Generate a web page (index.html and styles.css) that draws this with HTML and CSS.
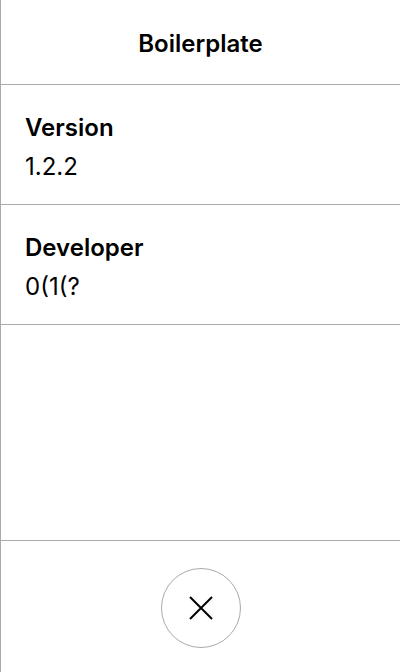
FILE: index.html
```html
<!DOCTYPE html>
<html>
<head>
<meta charset="utf-8">
<link rel="stylesheet" href="styles.css">
</head>
<body>
<div class="app">
  <header class="header">Boilerplate</header>
  <section class="row">
    <div class="label">Version</div>
    <div class="value">1.2.2</div>
  </section>
  <section class="row">
    <div class="label">Developer</div>
    <div class="value">0(1(?</div>
  </section>
  <div class="spacer"></div>
  <footer class="footer">
    <button class="close" aria-label="Close">
      <svg width="24" height="24" viewBox="0 0 24 24"><path d="M1 1L23 23M23 1L1 23" stroke="#000" stroke-width="2" fill="none"/></svg>
    </button>
  </footer>
</div>
</body>
</html>
```
FILE: styles.css
```css
html, body { margin: 0; padding: 0; background: #fff; }
body { font-family: Inter, "Noto Sans", sans-serif; color: #000; }
.app {
  width: 400px; height: 672px; box-sizing: border-box;
  border-left: 1px solid #aaa;
  display: flex; flex-direction: column;
}
.header {
  height: 84px; border-bottom: 1px solid #aaa;
  display: flex; align-items: center; justify-content: center;
  padding-top: 3px; box-sizing: content-box; height: 81px;
  font-size: 24px; font-weight: 600; line-height: 24px;
}
.row {
  height: 120px; border-bottom: 1px solid #aaa;
  padding: 31px 0 0 24px; box-sizing: border-box;
}
.label { font-size: 24px; font-weight: 600; line-height: 24px; }
.value { font-size: 24px; font-weight: 400; line-height: 24px; margin-top: 15px; }
.spacer { flex: 1; border-bottom: 1px solid #aaa; }
.footer { height: 131px; display: flex; justify-content: center; padding-top: 27px; box-sizing: border-box; }
.close {
  width: 80px; height: 80px; border-radius: 50%;
  border: 1px solid #aaa; background: #fff;
  display: flex; align-items: center; justify-content: center; padding: 0;
}
```
